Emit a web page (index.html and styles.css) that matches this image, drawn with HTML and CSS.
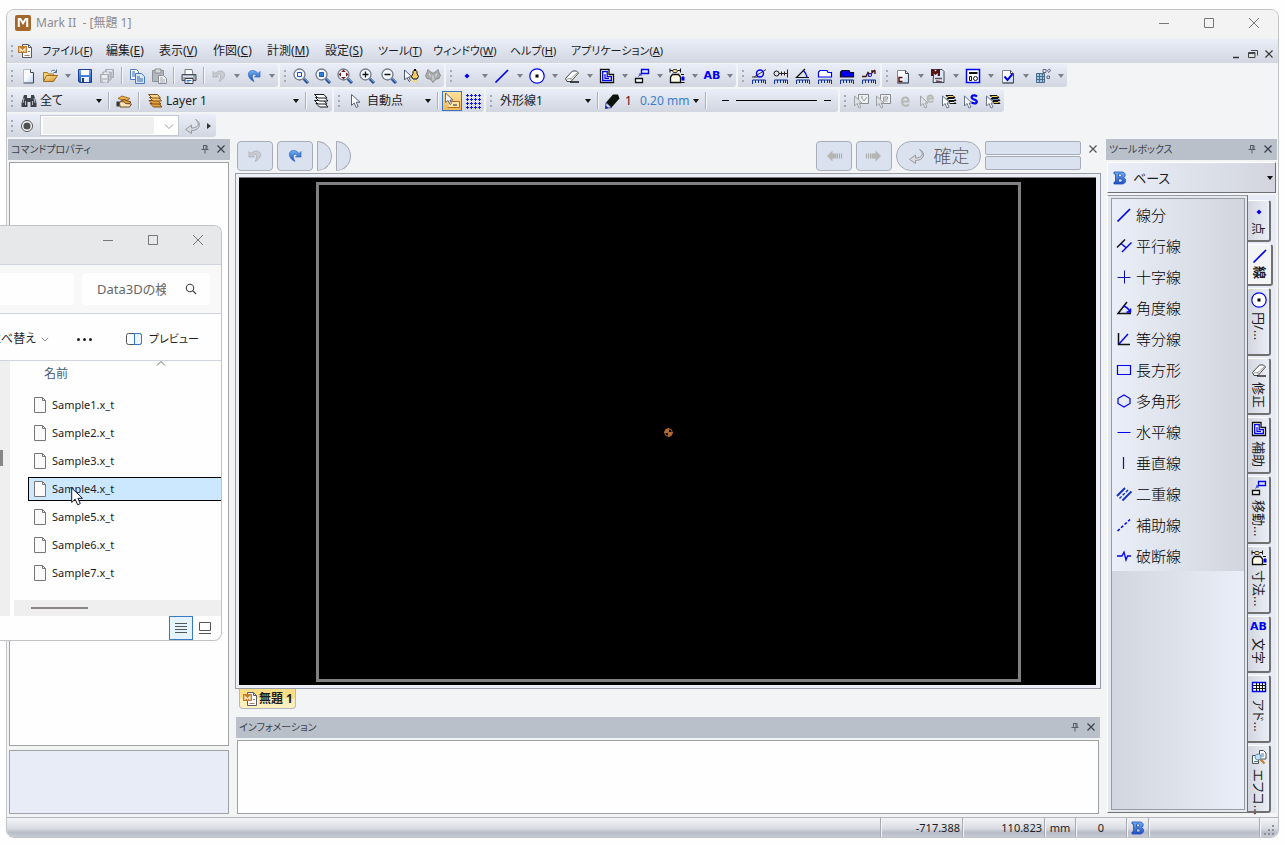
FILE: index.html
```html
<!DOCTYPE html>
<html lang="ja">
<head>
<meta charset="utf-8">
<title>Mark II - [無題 1]</title>
<link rel="stylesheet" href="styles.css">
</head>
<body>
<svg class="defs" aria-hidden="true">
  <defs>
    <linearGradient id="g-gold" x1="0" y1="0" x2="1" y2="1"><stop offset="0" stop-color="#ffe9a8"/><stop offset="1" stop-color="#d08a20"/></linearGradient>
    <linearGradient id="g-blue" x1="0" y1="0" x2="0" y2="1"><stop offset="0" stop-color="#6fb2f2"/><stop offset="1" stop-color="#1a4fc0"/></linearGradient>
    <linearGradient id="g-page" x1="0" y1="0" x2="1" y2="1"><stop offset="0.4" stop-color="#fff"/><stop offset="1" stop-color="#bcd2ee"/></linearGradient>
  </defs>
  <symbol id="logo" viewBox="0 0 16 16"><rect width="16" height="16" rx="2" fill="#a4682f"/><path d="M3.8 12V4h1.6L8 8.2 10.6 4h1.6v8" fill="none" stroke="#fff" stroke-width="2"/></symbol>
  <symbol id="doc" viewBox="0 0 16 16"><path d="M5.500 1.500h6l3 3v10h-9z" fill="#fff" stroke="#555a66"/><path d="M11.500 1.500v3h3" fill="none" stroke="#555a66"/><rect x="1" y="3" width="9" height="7" fill="#c07c2e"/><path d="M3 9V5.500l2.500 2.500L8 5.500V9" fill="none" stroke="#ffe9c4" stroke-width="1.300"/><path d="M7.500 12.500h5M11 8.500h2" stroke="#a08060"/></symbol>
  <symbol id="new" viewBox="0 0 16 16"><path d="M3.500 1.500h7l3 3v10h-10z" fill="url(#g-page)"/><path d="M3.500 14.500v-13h7" fill="none" stroke="#b8bcc8"/><path d="M10.500 1.500v3h3v10.500h-10" fill="none" stroke="#3a4252"/></symbol>
  <symbol id="open" viewBox="0 0 16 16"><path d="M1.500 13.500V4.500h4l1 1.500h5v2" fill="#f6d37a" stroke="#a87820"/><path d="M1.500 13.500l3-6h11l-4 6z" fill="url(#g-gold)" stroke="#a06a18"/><path d="M9 3.500c2-2 4-1.500 5 .5M14.500 1.500v3h-3" fill="none" stroke="#56688c"/></symbol>
  <symbol id="save" viewBox="0 0 16 16"><path d="M1.500 1.500h13v13h-12l-1-1z" fill="url(#g-blue)" stroke="#1c3f94"/><rect x="4" y="2" width="8" height="5" fill="#fff"/><rect x="4" y="9" width="8" height="5" fill="#e8f0fb"/><rect x="5" y="10" width="2" height="4" fill="#1b3a80"/></symbol>
  <symbol id="saveall" viewBox="0 0 16 16"><g fill="#c4c8ce" stroke="#a6aab2"><path d="M6.500 1.500h8v8h-8z"/><path d="M4 4h8v8H4z"/><path d="M1.500 6.500h8v8h-8z"/></g><path d="M3 7h5v3H3zM5 4.500h5v1.500H5zM8 2h5v1.500H8z" fill="#eceef1"/><path d="M4 12h4v2.500H4z" fill="#e2e4e8"/></symbol>
  <symbol id="copy" viewBox="0 0 16 16"><g fill="#fff" stroke="#4a78c0"><path d="M1.500 1.500h6l2 2v8h-8z"/><path d="M6.500 5.500h6l3 3v7h-9z" fill="#d8e8fb"/></g><path d="M3 4h3M3 6h3M3 8h3M8 9h3M8 11h6M8 13h6" stroke="#2f66b4"/></symbol>
  <symbol id="paste" viewBox="0 0 16 16"><path d="M1.500 2.500h11v11h-11z" fill="#b4b7bc" stroke="#8c9097"/><path d="M4 1h6v4H4z" fill="#d6d8dc" stroke="#8c9097"/><path d="M7.500 7.500h5l3 3v5h-8z" fill="#f0f1f3" stroke="#8c9097"/><path d="M9 10h3M9 12h5M9 14h5" stroke="#a6a9ae"/></symbol>
  <symbol id="print" viewBox="0 0 16 16"><path d="M4 1.500h7l1 5H4z" fill="#fff" stroke="#777d88"/><path d="M1 6.500h14v6H1z" fill="#a6acb8" stroke="#4a505c"/><path d="M2 8.500h12" stroke="#e4e8ee"/><path d="M4 10.500h8v5H4z" fill="#fff" stroke="#3c424c"/><path d="M5.500 12.500h5M5.500 14h3" stroke="#3572c8"/><circle cx="13" cy="8" r=".8" fill="#2d8a3c"/></symbol>
  <symbol id="undo" viewBox="0 0 16 16"><path d="M2 3.500v5.500h5.500L5.700 7.200C9 4.500 11.500 7.500 8 13.500 15.500 10 15 3 9.500 3 7 3 5 4.500 4 5.500z" fill="#c9cbcf" stroke="#a9abb0" stroke-width=".7"/></symbol>
  <symbol id="redo" viewBox="0 0 16 16"><path d="M14 3.500v5.500H8.500l1.800-1.800C7 4.500 4.500 7.500 8 13.500.5 10 1 2.500 6.500 2.500 9 2.500 11 4 12 5.500z" fill="url(#g-blue)" stroke="#2458b0" stroke-width=".6"/></symbol>
  <symbol id="lens" viewBox="0 0 16 16"><circle cx="6.500" cy="6.500" r="5.500" fill="#f2f8ff" stroke="#747b88" stroke-width="1.300"/><path d="M10.800 10.800l4.200 4.200" stroke="#284f92" stroke-width="3"/><path d="M11 10.200l4 4" stroke="#80b6ee"/></symbol>
  <symbol id="z-win" viewBox="0 0 16 16"><use href="#lens"/><path d="M4.500 4.500h4v4h-4z" fill="#fff" stroke="#1c4bc0"/></symbol>
  <symbol id="z-fill" viewBox="0 0 16 16"><use href="#lens"/><path d="M4.500 4.500h4v4h-4z" fill="#2f7de0" stroke="#2458a8"/></symbol>
  <symbol id="z-all" viewBox="0 0 16 16"><use href="#lens"/><path d="M6.500 1.500l2.300 2.500H4.200zM6.500 11.500L8.800 9H4.200zM1.500 6.500L4 4.200v4.600zM11.500 6.500L9 4.200v4.600z" fill="#7a2020"/></symbol>
  <symbol id="z-in" viewBox="0 0 16 16"><use href="#lens"/><path d="M3.500 6.500h6M6.500 3.500v6" stroke="#111" stroke-width="1.300"/></symbol>
  <symbol id="z-out" viewBox="0 0 16 16"><use href="#lens"/><path d="M3.500 6.500h6" stroke="#111" stroke-width="1.300"/></symbol>
  <symbol id="arrowcur" viewBox="0 0 16 16"><path d="M3.500 1.500v11l2.700-2.500 2 4.500 2-1-2-4.300H12z" fill="#fff" stroke="#56607a"/></symbol>
  <symbol id="lamp" viewBox="0 0 16 16"><path d="M1.500 2v10l2.500-2.500 2 4 1.500-1-2-3.500h3.500z" fill="#fff" stroke="#4a5a78"/><path d="M10 3.500l2-2 2 2v2l1.500 3-1.500 2.500h-4L8.500 8.500 10 5.500z" fill="#f6cd5c" stroke="#111"/><path d="M11 1h2v2h-2z"/><path d="M11.500 12v2M14 12v3M8.500 12l-1 2" stroke="#f6d660"/></symbol>
  <symbol id="owl" viewBox="0 0 16 16"><path d="M3 1.500l2.500 2.500h1L8 5.500 9.500 4h1L13 1.500l1 3 1.500 3-1.500 3-2.500.5-2 1.500L8 14.500 6.500 12.500l-2-1.500L2 10.500l-1.500-3L2 4.500z" fill="#a7abab" stroke="#888c8c"/><path d="M4 5.500l1.500 3M12 5.500l-1.500 3M8 7.500v5" stroke="#d6d9d9" stroke-width="1.200"/></symbol>
  <symbol id="dot" viewBox="0 0 16 16"><path d="M8 5.500l2.500 2.500L8 10.500 5.500 8z" fill="#0000f0"/></symbol>
  <symbol id="line" viewBox="0 0 16 16"><path d="M1.500 14.500L14 2" stroke="#0000f0" stroke-width="1.700"/></symbol>
  <symbol id="circle" viewBox="0 0 16 16"><circle cx="8" cy="8" r="7.200" fill="#fff" stroke="#0000f0" stroke-width="1.200"/><rect x="6.500" y="6.500" width="3" height="3"/></symbol>
  <symbol id="eraser" viewBox="0 0 16 16"><path d="M1.500 10.500L8.500 3h4l2 2-7.500 8.500H3z" fill="#fcfcfc" stroke="#444"/><path d="M3 11l4-.5L14 4M7 10.500v2" fill="none" stroke="#999"/><path d="M6 14h9" stroke="#111" stroke-width="1.300"/></symbol>
  <symbol id="offset" viewBox="0 0 16 16"><path d="M1.500 1.500h8.500v5h4.500v8h-13z" fill="#fff" stroke="#111" stroke-width="1.300"/><path d="M3.700 3.700h4.500v5h4.200v3.800H3.700z" fill="none" stroke="#0000f0" stroke-width="1.300"/><path d="M6 6v4.300h4" fill="none" stroke="#0000f0" stroke-width="1.200"/></symbol>
  <symbol id="move" viewBox="0 0 16 16"><path d="M7.500 1.500h7v4h-7z" fill="none" stroke="#0000f0" stroke-width="1.300"/><path d="M1.500 10.500h7v4h-7z" fill="#fff" stroke="#111" stroke-width="1.300"/><path d="M6.500 6L4.500 8.500M5 6h2v2" fill="none" stroke="#2432c8"/></symbol>
  <symbol id="dim" viewBox="0 0 16 16"><path d="M1.500 14.500V9l2-2.500h6L11.500 9v5.500z" fill="#fffbe8" stroke="#111" stroke-width="1.300"/><path d="M1 .5v4M11.500.5v4M1 2.500h3M8.500 2.500h3" fill="none" stroke="#111"/><path d="M4.500 1.500h3l1 1.500-1 1.500h-3L3.500 3z" fill="#f6dc90" stroke="#111" stroke-width=".8"/><path d="M12 6.500h3M12 14.500h3.500" stroke="#111"/><path d="M12.500 9.500l1.500-1.500 1.500 1.500v3H12.500z" fill="#0000f0"/></symbol>
  <symbol id="ruler" viewBox="0 0 16 16"><path d="M1.500 16v-4h13v4M4.500 12v3M7.500 12v3M10.500 12v3M12.500 12v3" fill="none" stroke="#0b2f9c"/></symbol>
  <symbol id="m1" viewBox="0 0 16 16"><use href="#ruler"/><path d="M1 9h6M3 9l12-7.500" fill="none" stroke="#333"/><circle cx="9" cy="5.500" r="3.500" fill="none" stroke="#0000f0" stroke-width="1.400"/></symbol>
  <symbol id="m2" viewBox="0 0 16 16"><use href="#ruler"/><circle cx="3.500" cy="5.500" r="2.500" fill="none" stroke="#111"/><path d="M6 5.500h8M14.500 1.500v8M8.500 3.500v4M11.500 3.500v4" stroke="#2c2020"/></symbol>
  <symbol id="m3" viewBox="0 0 16 16"><use href="#ruler"/><path d="M14 9.500H1.500L10 1" fill="none" stroke="#111" stroke-width="1.200"/><path d="M8 2q3 3 4 7" fill="none" stroke="#0000f0" stroke-width="1.300"/></symbol>
  <symbol id="m4" viewBox="0 0 16 16"><use href="#ruler"/><path d="M1.500 9V4l1.500-1.500h7l1 2h3.500V9z" fill="#fff" stroke="#0000f0" stroke-width="1.200"/></symbol>
  <symbol id="m5" viewBox="0 0 16 16"><use href="#ruler"/><path d="M1.500 9V4l1.500-1.500h7l1 2h3.500V9z" fill="#0000f0" stroke="#111" stroke-width="1.200"/></symbol>
  <symbol id="m6" viewBox="0 0 16 16"><use href="#ruler"/><path d="M1 8.500h4l2-4 3 3M7 8.500l7-6.500M10 3h4v3" fill="none" stroke="#401818" stroke-width="1.400"/><circle cx="9" cy="7" r="1.500" fill="#fff" stroke="#0000f0"/></symbol>
  <symbol id="page" viewBox="0 0 16 16"><path d="M2.500 2.500h8l3 3v9.500h-11z" fill="url(#g-page)" stroke="#7d8796"/><path d="M10.500 2.500v3h3V15h-11" fill="none" stroke="#3d4452"/></symbol>
  <symbol id="p-c" viewBox="0 0 16 16"><use href="#page"/><path d="M7.500 9.500H4v4h3.500" fill="none" stroke="#541212" stroke-width="1.500"/></symbol>
  <symbol id="p-m" viewBox="0 0 16 16"><path d="M4 1.500h8l2 2v11H3z" fill="#dce9f8" stroke="#3b4350"/><path d="M1 1h2.500L5.500 3.500 7.500 1H10v7H7.700V5L5.500 7 3.300 5v3H1z" fill="#5a1010"/><path d="M5 10.500h7M6 13l6 1" fill="none" stroke="#6b4a4a" stroke-width="1.600"/></symbol>
  <symbol id="p-form" viewBox="0 0 16 16"><path d="M1.500 1.500h13v13h-13z" fill="#fff" stroke="#0000f0" stroke-width="1.500"/><path d="M4 5h8.500" stroke="#111" stroke-width="2"/><path d="M4.500 8.500h2v4h-2z" fill="none" stroke="#111"/><circle cx="10.500" cy="10.500" r="2" fill="none" stroke="#111"/></symbol>
  <symbol id="p-check" viewBox="0 0 16 16"><use href="#page"/><path d="M4.500 8.500l3 3.500 5-6" fill="none" stroke="#0000f0" stroke-width="2"/></symbol>
  <symbol id="p-grid" viewBox="0 0 16 16"><path d="M1 5h9v10H1z" fill="#9cc8e2"/><path d="M1.500 5.500h8v9h-8zM1 8.500h9M1 11.500h9M4.500 5v10M7.500 5v10" fill="none" stroke="#4a6a88"/><path d="M8 1.500h3v3H8zM12.500 2.500l2-1.500 1 2-2 1.500zM12 8h2.500v2.500H12z" fill="#dde8f0" stroke="#668"/></symbol>
  <symbol id="binoc" viewBox="0 0 16 16"><path d="M3 2h3v3h4V2h3l2.500 8v4H9.500V9h-3v5H.5v-4z" fill="#3c4048"/><path d="M3 5l-1 5M13 5l1 5M4.500 8v4M11.500 8v4" stroke="#b4b8c0"/></symbol>
  <symbol id="hand" viewBox="0 0 16 16"><path d="M2 5.500L6 3l8 2.500L10 8z" fill="#f1b04a" stroke="#8e5a18" stroke-width=".8"/><path d="M4 8.500l4-2 7 2.500-3 3z" fill="#e09830" stroke="#4a3010" stroke-width=".8"/><path d="M.5 8.500h3v5h-3z" fill="#333"/><path d="M3.500 9c3-1 5 0 6 1.500l6 .5-2 3H4z" fill="#ffe2b8" stroke="#4a3010" stroke-width=".8"/></symbol>
  <symbol id="layers" viewBox="0 0 16 16"><g fill="#e9a13e" stroke="#6c4310" stroke-width=".9"><path d="M3 10.500l3.500 3.500H15l-3-3.500z"/><path d="M2 7.500L5.500 11H14l-3-3.500z"/><path d="M2.500 4.500L6 8h8.500l-3-3.500z" fill="#ffc565"/><path d="M1.500 1.500L5 5h8.500l-3-3.500z" fill="#ffd78c"/></g></symbol>
  <symbol id="layersw" viewBox="0 0 16 16"><g fill="#fff" stroke="#16181c"><path d="M3 10.500l3.500 3.500H15l-3-3.500z"/><path d="M1.500 7.500L5 11h9l-3-3.500z"/><path d="M2.500 4.500L6 8h9l-3-3.500z"/><path d="M1.500 1.500L5 5h9l-3-3.500z"/></g></symbol>
  <symbol id="gridpts" viewBox="0 0 16 16"><path d="M0 2.500h16M0 6.500h16M0 10.500h16M0 14.500h16M2.500 0v16M6.500 0v16M10.500 0v16M14.500 0v16" fill="none" stroke="#1616e0" stroke-dasharray="3 1" stroke-dashoffset="3"/></symbol>
  <symbol id="snap" viewBox="0 0 16 16"><path d="M6.500 8.500h9v6h-12" fill="#ffe6a8" stroke="#b06a20"/><path d="M9 12h4" stroke="#222"/><path d="M1.500 0v9.500L4 7.500l2 4 1.500-1-1.500-3.500h3z" fill="#f4f6fa" stroke="#6a6a78"/></symbol>
  <symbol id="pencil" viewBox="0 0 16 16"><path d="M2 9.500L9 1.500h5l1.500 4-8 9z" fill="#0c120c"/><path d="M2 9.500l5.500 5-6 1z" fill="#dfe8ff" stroke="#16208c" stroke-width=".8"/><path d="M1 15.500l1-3 2.500 2.500z" fill="#1a28b0"/></symbol>
  <symbol id="curs" viewBox="0 0 16 16"><path d="M1.500 3v10L4 10.500l2 4.500 2-1-2-4h3z" fill="#fff" stroke="#66718a"/></symbol>
  <symbol id="gcurs" viewBox="0 0 16 16"><path d="M1.500 3v10L4 10.500l2 4.500 2-1-2-4h3z" fill="#dfe1e4" stroke="#a0a3a8"/></symbol>
  <symbol id="s1" viewBox="0 0 16 16"><path d="M5.500 1.500h10v9h-10z" fill="#eff0f2" stroke="#888b90"/><path d="M8 4l3 4 3-4M8 4h2" fill="none" stroke="#989ba0"/><use href="#gcurs"/></symbol>
  <symbol id="s2" viewBox="0 0 16 16"><path d="M5.500 1.500h10v9h-10z" fill="#eff0f2" stroke="#888b90"/><path d="M8.500 6h4V4h-4v4h4" fill="none" stroke="#989ba0"/><use href="#gcurs"/></symbol>
  <symbol id="e" viewBox="0 0 16 16"><path d="M4.500 8.500h7C12 3 5 3 5 8.500c0 5 4.500 5 7 3" fill="none" stroke="#b6b9b4" stroke-width="2"/></symbol>
  <symbol id="s4" viewBox="0 0 16 16"><path d="M8 5.500h6c0-4-5-4-5.500 0 0 4 4 4 6 2.500" fill="none" stroke="#b6b9b4" stroke-width="1.800"/><use href="#gcurs"/></symbol>
  <symbol id="s5" viewBox="0 0 16 16"><g fill="#fff" stroke="#111"><path d="M7 8.500l2 2h6l-2-2zM6 5.500l2 2h7l-2-2z"/><path d="M5 2.500l2 2h7l-2-2z" fill="#f4d878"/></g><use href="#curs"/></symbol>
  <symbol id="s6" viewBox="0 0 16 16"><path d="M14 3.500C11 1 7.500 3 9 5.200c1 1.500 5 1.300 4.800 3.600-.3 2.200-4 2-5.800.2" fill="none" stroke="#0000f0" stroke-width="2.200"/><use href="#curs"/></symbol>
  <symbol id="s7" viewBox="0 0 16 16"><g stroke="#111"><path d="M7 8.500l2 2h6l-2-2z" fill="#f4c850"/><path d="M6 5.500l2 2h7l-2-2z" fill="#5a8ac8"/><path d="M5 2.500l2 2h7l-2-2z" fill="#f4d878"/></g><use href="#curs"/></symbol>
  <symbol id="enter" viewBox="0 0 16 16"><path d="M11.500 1.500c5 4 3 8.500-4 8.500V7L1.500 11.500l6 4v-3c9 0 10.500-8 4-11z" fill="#d9dade" stroke="#96999f"/></symbol>
  <symbol id="larr" viewBox="0 0 16 16"><path d="M1 8l5.500-5.500v3h4v5h-4v3z" fill="#b4b6b4"/><path d="M11.500 5.500v5M13.500 5.500v5M15.500 5.500v5" stroke="#a6a9a8"/></symbol>
  <symbol id="rarr" viewBox="0 0 16 16"><path d="M15 8L9.500 2.500v3h-4v5h4v3z" fill="#b4b6b4"/><path d="M4.500 5.500v5M2.500 5.500v5M.5 5.500v5" stroke="#a6a9a8"/></symbol>
  <symbol id="pin" viewBox="0 0 10 10"><path d="M3 1.500h4M3.500 1.500v4M6 1.500v4M7 1.500v4M1.500 5.500h7M5 6v3.500" fill="none" stroke="#565d68"/></symbol>
  <symbol id="x" viewBox="0 0 10 10"><path d="M1.500 1.500l7 7M8.500 1.500l-7 7" stroke="currentColor" stroke-width="1.200"/></symbol>
  <symbol id="min" viewBox="0 0 10 10"><path d="M0 5.500h10" stroke="currentColor"/></symbol>
  <symbol id="max" viewBox="0 0 10 10"><path d="M.5.5h9v9h-9z" fill="none" stroke="currentColor"/></symbol>
  <symbol id="close" viewBox="0 0 10 10"><path d="M0 0l10 10M10 0L0 10" stroke="currentColor"/></symbol>
  <symbol id="restore" viewBox="0 0 10 10"><path d="M3 1.500h6.500v5M.5 3.500h6.500v5H.5zM.5 4.500h6.500" fill="none" stroke="#444"/></symbol>
  <symbol id="lowmin" viewBox="0 0 10 10"><path d="M1 8.500h6" stroke="#333" stroke-width="1.500"/></symbol>
  <symbol id="bee" viewBox="0 0 16 16"><path d="M2 2h7.500c4.500 0 4.500 4.500 2 5.500 3.500 1.500 2.500 6.500-1.500 6.500H2v-2h1.500V4H2zM6.500 4v2.800h1.800c1.800 0 1.800-2.800 0-2.800zM6.500 9v3h2c2.200 0 2.200-3 0-3z" fill="url(#g-blue)" fill-rule="evenodd" stroke="#2349b8" stroke-width=".8"/></symbol>
  <symbol id="t-par" viewBox="0 0 16 16"><path d="M1 9.500L9 1.500" stroke="#111" stroke-width="1.400"/><path d="M6 14l9.500-9.500M5 5.500l5.500 4.500" stroke="#0000e0" stroke-width="1.400"/></symbol>
  <symbol id="t-cross" viewBox="0 0 16 16"><path d="M1.500 8.500h13M8.500 1.500v13" stroke="#1010b0"/></symbol>
  <symbol id="t-ang" viewBox="0 0 16 16"><path d="M15 13.500H2L11 2" fill="none" stroke="#111" stroke-width="1.500"/><path d="M7.500 6q5 1.500 6.500 6.500M10.500 12h4V8.500" fill="none" stroke="#0000f0" stroke-width="1.400"/></symbol>
  <symbol id="t-div" viewBox="0 0 16 16"><path d="M2.500 2v11.500H14" fill="none" stroke="#111" stroke-width="1.500"/><path d="M3 13L12 3" stroke="#0000f0" stroke-width="1.400"/></symbol>
  <symbol id="t-rect" viewBox="0 0 16 16"><path d="M1.500 3.500h13v9h-13z" fill="none" stroke="#0000f0" stroke-width="1.200"/></symbol>
  <symbol id="t-hex" viewBox="0 0 16 16"><path d="M8 2l6 3.500v5L8 14l-6-3.500v-5z" fill="none" stroke="#0000f0" stroke-width="1.200"/></symbol>
  <symbol id="t-h" viewBox="0 0 16 16"><path d="M1.500 8.500h13" stroke="#0000f0"/></symbol>
  <symbol id="t-v" viewBox="0 0 16 16"><path d="M7.500 2v12" stroke="#1010a0" stroke-width="1.200"/></symbol>
  <symbol id="t-dbl" viewBox="0 0 16 16"><path d="M1 10l8-8M6.500 14.500L15.500 5.500" stroke="#1030c0" stroke-width="1.900"/><path d="M3.500 12.500L13 3" stroke="#1030c0" stroke-width="1.400" stroke-dasharray="3 1.500"/></symbol>
  <symbol id="t-aux" viewBox="0 0 16 16"><path d="M1.500 14L14 2.500" stroke="#0000f0" stroke-width="1.600" stroke-dasharray="3 1.800"/></symbol>
  <symbol id="t-brk" viewBox="0 0 16 16"><path d="M1 8h5l2-4 2 8 1.500-4H15" fill="none" stroke="#0000f0" stroke-width="1.300"/></symbol>
  <symbol id="table" viewBox="0 0 16 16"><path d="M1.500 3.500h13v9h-13z" fill="#fff" stroke="#0000f0" stroke-width="1.400"/><path d="M2 6.500h12M2 9.500h12M5.500 4v8M8.500 4v8M11.500 4v8" stroke="#111"/></symbol>
  <symbol id="inspect" viewBox="0 0 16 16"><path d="M8.500 1.500h4l2.500 2.500v6H8.500zM1.500 6.500h6v8h-6z" fill="#fff" stroke="#455"/><path d="M10 5h3M10 7h3M3 12.500h4" stroke="#4878b0"/><circle cx="7" cy="8" r="3" fill="#bfe2fa" stroke="#6a90b0"/><path d="M9.500 10.500l4 4" stroke="#c07828" stroke-width="2"/></symbol>
  <symbol id="file" viewBox="0 0 12 16"><path d="M.5.500h8l3 3v12H.5z" fill="#fafafa" stroke="#777"/><path d="M8.500.5v3h3" fill="none" stroke="#777"/></symbol>
  <symbol id="search" viewBox="0 0 12 12"><circle cx="5" cy="5" r="3.700" fill="none" stroke="#444" stroke-width="1.100"/><path d="M7.700 7.700L11 11" stroke="#444" stroke-width="1.200"/></symbol>
  <symbol id="chev" viewBox="0 0 10 10"><path d="M1 3.500l4 4 4-4" fill="none" stroke="currentColor"/></symbol>
  <symbol id="preview" viewBox="0 0 16 12"><rect x=".5" y=".5" width="15" height="11" rx="2" fill="#f6faff" stroke="#555"/><path d="M8.500.5h5a2 2 0 0 1 2 2v7a2 2 0 0 1-2 2h-5z" fill="#eef5ff" stroke="#2a76d0"/></symbol>
  <symbol id="rows" viewBox="0 0 12 10"><path d="M0 .5h12M0 3.500h12M0 6.500h12M0 9.500h12" stroke="#555"/></symbol>
  <symbol id="thumb" viewBox="0 0 12 12"><path d="M.5.500h11v8H.5zM0 11.500h12" fill="none" stroke="#555"/></symbol>
  <symbol id="origin" viewBox="0 0 9 9"><circle cx="4.500" cy="4.500" r="3.800" fill="none" stroke="#b06a30"/><path d="M4.500 4.500V.5a4 4 0 0 0-4 4zM4.500 4.500v4a4 4 0 0 0 4-4z" fill="#b06a30"/><path d="M4.500 0v9M0 4.500h9" stroke="#b06a30"/></symbol>
  <symbol id="grip" viewBox="0 0 12 12"><path d="M8 0h2v2H8zM4 4h2v2H4zM8 4h2v2H8zM0 8h2v2H0zM4 8h2v2H4zM8 8h2v2H8z" fill="#8d919a"/></symbol>
  <symbol id="pointer" viewBox="0 0 12 19"><path d="M.7 1v14.500l3.500-3.300 2.500 5.600 2.600-1.200-2.400-5.300h4.600z" fill="#fff" stroke="#15182c"/></symbol>
</svg>

<main class="app">
  <header class="title">
    <svg class="i16"><use href="#logo"/></svg>
    <h1>Mark II&nbsp; - [無題 1]</h1>
    <div class="wctl">
      <button type="button" aria-label="最小化"><svg class="i10"><use href="#min"/></svg></button>
      <button type="button" aria-label="最大化"><svg class="i10"><use href="#max"/></svg></button>
      <button type="button" aria-label="閉じる"><svg class="i10"><use href="#close"/></svg></button>
    </div>
  </header>

  <nav class="menu">
    <svg class="i16"><use href="#doc"/></svg>
    <div class="menu-items">
      <button class="kana" type="button">ファイル(<u>F</u>)</button><button type="button">編集(<u>E</u>)</button><button type="button">表示(<u>V</u>)</button><button type="button">作図(<u>C</u>)</button><button type="button">計測(<u>M</u>)</button><button type="button">設定(<u>S</u>)</button><button class="kana" type="button">ツール(<u>T</u>)</button><button class="kana" type="button">ウィンドウ(<u>W</u>)</button><button class="kana" type="button">ヘルプ(<u>H</u>)</button><button class="kana" type="button">アプリケーション(<u>A</u>)</button>
    </div>
    <div class="mdi">
      <button type="button" aria-label="文書を最小化"><svg class="i10"><use href="#lowmin"/></svg></button>
      <button type="button" aria-label="文書を元に戻す"><svg class="i10"><use href="#restore"/></svg></button>
      <button type="button" aria-label="文書を閉じる"><svg class="i10"><use href="#x"/></svg></button>
    </div>
  </nav>

  <div class="bars">
    <div class="bar">
      <div class="seg">
        <button class="tb" type="button" aria-label="新規"><svg><use href="#new"/></svg></button><button class="tb" type="button" aria-label="開く"><svg><use href="#open"/></svg></button><button class="dd" type="button" aria-label="開くの一覧"></button><button class="tb" type="button" aria-label="保存"><svg><use href="#save"/></svg></button><button class="tb" type="button" aria-label="すべて保存"><svg><use href="#saveall"/></svg></button><i class="sep"></i><button class="tb" type="button" aria-label="コピー"><svg><use href="#copy"/></svg></button><button class="tb" type="button" aria-label="貼り付け"><svg><use href="#paste"/></svg></button><i class="sep"></i><button class="tb" type="button" aria-label="印刷"><svg><use href="#print"/></svg></button><i class="sep"></i><button class="tb" type="button" aria-label="元に戻す"><svg><use href="#undo"/></svg></button><button class="dd" type="button" aria-label="履歴"></button><button class="tb" type="button" aria-label="やり直し"><svg><use href="#redo"/></svg></button><button class="dd" type="button" aria-label="やり直し履歴"></button>
      </div>
      <div class="seg">
        <button class="tb" type="button" aria-label="窓拡大"><svg><use href="#z-win"/></svg></button><button class="tb" type="button" aria-label="用紙表示"><svg><use href="#z-fill"/></svg></button><button class="tb" type="button" aria-label="全体表示"><svg><use href="#z-all"/></svg></button><button class="tb" type="button" aria-label="拡大"><svg><use href="#z-in"/></svg></button><button class="tb" type="button" aria-label="縮小"><svg><use href="#z-out"/></svg></button><button class="tb" type="button" aria-label="強調"><svg><use href="#lamp"/></svg></button><button class="tb" type="button" aria-label="検索"><svg><use href="#owl"/></svg></button>
      </div>
      <div class="seg">
        <button class="tb" type="button" aria-label="点"><svg><use href="#dot"/></svg></button><button class="dd" type="button" aria-label="点の一覧"></button><button class="tb" type="button" aria-label="線"><svg><use href="#line"/></svg></button><button class="dd" type="button" aria-label="線の一覧"></button><button class="tb" type="button" aria-label="円"><svg><use href="#circle"/></svg></button><button class="dd" type="button" aria-label="円の一覧"></button><button class="tb" type="button" aria-label="修正"><svg><use href="#eraser"/></svg></button><button class="dd" type="button" aria-label="修正の一覧"></button><button class="tb" type="button" aria-label="補助"><svg><use href="#offset"/></svg></button><button class="dd" type="button" aria-label="補助の一覧"></button><button class="tb" type="button" aria-label="移動"><svg><use href="#move"/></svg></button><button class="dd" type="button" aria-label="移動の一覧"></button><button class="tb" type="button" aria-label="寸法"><svg><use href="#dim"/></svg></button><button class="dd" type="button" aria-label="寸法の一覧"></button><button class="tb" type="button"><b class="ab">AB</b></button><button class="dd" type="button" aria-label="文字の一覧"></button>
      </div>
      <div class="seg">
        <button class="tb" type="button" aria-label="計測1"><svg><use href="#m1"/></svg></button><button class="tb" type="button" aria-label="計測2"><svg><use href="#m2"/></svg></button><button class="tb" type="button" aria-label="計測3"><svg><use href="#m3"/></svg></button><button class="tb" type="button" aria-label="計測4"><svg><use href="#m4"/></svg></button><button class="tb" type="button" aria-label="計測5"><svg><use href="#m5"/></svg></button><button class="tb" type="button" aria-label="計測6"><svg><use href="#m6"/></svg></button>
      </div>
      <div class="seg">
        <button class="tb" type="button" aria-label="コマンド"><svg><use href="#p-c"/></svg></button><button class="dd" type="button" aria-label="コマンド一覧"></button><button class="tb" type="button" aria-label="マクロ"><svg><use href="#p-m"/></svg></button><button class="dd" type="button" aria-label="マクロ一覧"></button><button class="tb" type="button" aria-label="フォーム"><svg><use href="#p-form"/></svg></button><button class="dd" type="button" aria-label="フォーム一覧"></button><button class="tb" type="button" aria-label="検査"><svg><use href="#p-check"/></svg></button><button class="dd" type="button" aria-label="検査一覧"></button><button class="tb" type="button" aria-label="部品"><svg><use href="#p-grid"/></svg></button><button class="dd" type="button" aria-label="部品一覧"></button>
      </div>
    </div>

    <div class="bar">
      <div class="seg">
        <label class="pick w-all"><svg class="i16"><use href="#binoc"/></svg><select aria-label="検索対象"><option>全て</option></select></label><i class="sep"></i><button class="tb" type="button" aria-label="レイヤ取得"><svg><use href="#hand"/></svg></button><i class="sep"></i><label class="pick w-layer"><svg class="i16"><use href="#layers"/></svg><select aria-label="レイヤ"><option>Layer 1</option></select></label><i class="sep"></i><button class="tb" type="button" aria-label="レイヤ設定"><svg><use href="#layersw"/></svg></button>
      </div>
      <div class="seg">
        <label class="pick w-point"><svg class="i16"><use href="#arrowcur"/></svg><select aria-label="点種"><option>自動点</option></select></label><i class="sep"></i><button class="tb on" type="button" aria-label="スナップ"><svg><use href="#snap"/></svg></button><button class="tb" type="button" aria-label="グリッド"><svg><use href="#gridpts"/></svg></button>
      </div>
      <div class="seg">
        <label class="pick w-style"><select aria-label="線種"><option>外形線1</option></select></label><i class="sep"></i><label class="pick w-pen"><svg class="i16"><use href="#pencil"/></svg><b class="penno">1</b><select class="blue" aria-label="線幅"><option>0.20 mm</option></select></label><i class="sep"></i><span class="linetype"><i></i><i></i><i></i></span>
      </div>
      <div class="seg">
        <button class="tb" type="button" aria-label="選択1"><svg><use href="#s1"/></svg></button><button class="tb" type="button" aria-label="選択2"><svg><use href="#s2"/></svg></button><button class="tb" type="button" aria-label="要素"><svg><use href="#e"/></svg></button><button class="tb" type="button" aria-label="要素選択"><svg><use href="#s4"/></svg></button><button class="tb" type="button" aria-label="レイヤ選択"><svg><use href="#s5"/></svg></button><button class="tb" type="button" aria-label="スタイル選択"><svg><use href="#s6"/></svg></button><button class="tb" type="button" aria-label="色選択"><svg><use href="#s7"/></svg></button>
      </div>
    </div>

    <div class="bar">
      <div class="seg cmdseg">
        <input class="rad" type="radio" checked aria-label="入力">
        <span class="combo"><input type="text" disabled aria-label="コマンド入力"><svg class="i10"><use href="#chev"/></svg></span>
        <button class="tb" type="button" aria-label="実行"><svg><use href="#enter"/></svg></button><button class="more" type="button" aria-label="その他"></button>
      </div>
    </div>
  </div>

  <div class="dock">
    <section class="left">
      <div class="phead"><h2>コマンドプロパティ</h2><button type="button" aria-label="固定"><svg class="i10"><use href="#pin"/></svg></button><button type="button" aria-label="閉じる"><svg class="i10"><use href="#x"/></svg></button></div>
      <div class="props"></div>
      <div class="hint"></div>
    </section>

    <section class="center">
      <div class="cmd">
        <button class="big" type="button" aria-label="元に戻す"><svg class="i16"><use href="#undo"/></svg></button>
        <button class="big" type="button" aria-label="やり直し"><svg class="i16"><use href="#redo"/></svg></button>
        <button class="half" type="button" aria-label="次"></button>
        <button class="half" type="button" aria-label="次の次"></button>
        <span class="fill"></span>
        <button class="big" type="button" aria-label="戻る"><svg class="i16"><use href="#larr"/></svg></button>
        <button class="big" type="button" aria-label="進む"><svg class="i16"><use href="#rarr"/></svg></button>
        <button class="ok" type="button"><svg class="i16"><use href="#enter"/></svg>確定</button>
        <span class="gauges"><i></i><i></i></span>
        <button class="cx" type="button" aria-label="閉じる"><svg class="i10"><use href="#x"/></svg></button>
      </div>
      <div class="frame"><div class="canvas"><div class="sheet"><svg class="origin"><use href="#origin"/></svg></div></div></div>
      <div class="doctabs"><button type="button"><svg class="i16"><use href="#doc"/></svg>無題 1</button></div>
      <div class="phead"><h2>インフォメーション</h2><button type="button" aria-label="固定"><svg class="i10"><use href="#pin"/></svg></button><button type="button" aria-label="閉じる"><svg class="i10"><use href="#x"/></svg></button></div>
      <div class="info"></div>
    </section>

    <section class="right">
      <div class="phead"><h2>ツールボックス</h2><button type="button" aria-label="固定"><svg class="i10"><use href="#pin"/></svg></button><button type="button" aria-label="閉じる"><svg class="i10"><use href="#x"/></svg></button></div>
      <label class="pick base"><svg class="i16"><use href="#bee"/></svg><select aria-label="ツールセット"><option>ベース</option></select></label>
      <div class="tools">
        <div class="tlist-wrap"><div class="tlist">
          <button type="button"><svg class="i16"><use href="#line"/></svg>線分</button>
          <button type="button"><svg class="i16"><use href="#t-par"/></svg>平行線</button>
          <button type="button"><svg class="i16"><use href="#t-cross"/></svg>十字線</button>
          <button type="button"><svg class="i16"><use href="#t-ang"/></svg>角度線</button>
          <button type="button"><svg class="i16"><use href="#t-div"/></svg>等分線</button>
          <button type="button"><svg class="i16"><use href="#t-rect"/></svg>長方形</button>
          <button type="button"><svg class="i16"><use href="#t-hex"/></svg>多角形</button>
          <button type="button"><svg class="i16"><use href="#t-h"/></svg>水平線</button>
          <button type="button"><svg class="i16"><use href="#t-v"/></svg>垂直線</button>
          <button type="button"><svg class="i16"><use href="#t-dbl"/></svg>二重線</button>
          <button type="button"><svg class="i16"><use href="#t-aux"/></svg>補助線</button>
          <button type="button"><svg class="i16"><use href="#t-brk"/></svg>破断線</button>
        </div></div>
        <div class="vtabs">
          <button class="short" type="button"><svg class="i16"><use href="#dot"/></svg><span>点</span></button>
          <button class="short sel" type="button"><svg class="i16"><use href="#line"/></svg><span>線</span></button>
          <button class="long" type="button"><svg class="i16"><use href="#circle"/></svg><span>円/...</span></button>
          <button class="mid" type="button"><svg class="i16"><use href="#eraser"/></svg><span>修正</span></button>
          <button class="mid" type="button"><svg class="i16"><use href="#offset"/></svg><span>補助</span></button>
          <button class="long" type="button"><svg class="i16"><use href="#move"/></svg><span>移動...</span></button>
          <button class="long" type="button"><svg class="i16"><use href="#dim"/></svg><span>寸法...</span></button>
          <button class="mid" type="button"><b class="ab">AB</b><span>文字</span></button>
          <button class="long" type="button"><svg class="i16"><use href="#table"/></svg><span>アド...</span></button>
          <button class="long" type="button"><svg class="i16"><use href="#inspect"/></svg><span>エフコ...</span></button>
        </div>
      </div>
    </section>
  </div>

  <footer class="status">
    <span class="num">-717.388</span><span class="num">110.823</span><span class="unit">mm</span><span class="zero">0</span><span class="sb"><svg class="i16"><use href="#bee"/></svg></span><span class="rest"></span><span class="gripc"><svg class="grip"><use href="#grip"/></svg></span>
  </footer>
</main>

<aside class="explorer">
  <div class="etitle">
    <button type="button" aria-label="最小化"><svg class="i10"><use href="#min"/></svg></button>
    <button type="button" aria-label="最大化"><svg class="i10"><use href="#max"/></svg></button>
    <button type="button" aria-label="閉じる"><svg class="i10"><use href="#close"/></svg></button>
  </div>
  <div class="eaddr"><span class="path"></span><label class="find"><input type="text" value="Data3Dの検索" aria-label="検索"><svg class="i12"><use href="#search"/></svg></label></div>
  <div class="ecmd">
    <button class="sort" type="button">並べ替え</button><svg class="i8"><use href="#chev"/></svg>
    <button class="dots" type="button" aria-label="その他"><i></i><i></i><i></i></button>
    <button class="prev" type="button"><svg><use href="#preview"/></svg>プレビュー</button>
  </div>
  <div class="ebody">
    <div class="navstrip"><i></i></div>
    <div class="files">
      <div class="colhead"><span>名前</span><svg class="i10"><use href="#chev"/></svg></div>
      <ul>
        <li><svg><use href="#file"/></svg>Sample1.x_t</li>
        <li><svg><use href="#file"/></svg>Sample2.x_t</li>
        <li><svg><use href="#file"/></svg>Sample3.x_t</li>
        <li class="cur"><svg><use href="#file"/></svg>Sample4.x_t<svg class="pointer"><use href="#pointer"/></svg></li>
        <li><svg><use href="#file"/></svg>Sample5.x_t</li>
        <li><svg><use href="#file"/></svg>Sample6.x_t</li>
        <li><svg><use href="#file"/></svg>Sample7.x_t</li>
      </ul>
      <div class="hscroll"><i></i></div>
    </div>
  </div>
  <div class="efoot"><button class="act" type="button" aria-label="詳細"><svg class="rows"><use href="#rows"/></svg></button><button type="button" aria-label="サムネイル"><svg class="i12"><use href="#thumb"/></svg></button></div>
</aside>
</body>
</html>
```

FILE: styles.css
```css
* { box-sizing: border-box; }
body {
  margin: 0;
  min-height: 100vh;
  display: flex;
  padding: 9px 6px 7px;
  background: #fefefe;
  color: #1c1c24;
  font: 12px/16px "Noto Sans", "Noto Sans CJK JP", sans-serif;
  font-feature-settings: "palt";
}
button, select, input { font: inherit; color: inherit; font-feature-settings: inherit; }
button { border: 0; padding: 0; margin: 0; background: none; display: flex; align-items: center; justify-content: center; white-space: nowrap; }
h1, h2, ul { margin: 0; padding: 0; font: inherit; list-style: none; }
svg { display: block; flex: none; }
.defs { position: absolute; width: 0; height: 0; }
.i8 { width: 8px; height: 8px; }
.i10 { width: 10px; height: 10px; }
.i12 { width: 12px; height: 12px; }
.i16 { width: 16px; height: 16px; }

.app { flex: 1; min-width: 0; display: flex; flex-direction: column; border: 1px solid #c2c3c6; border-radius: 8px; background: #f3f4f6; overflow: hidden; }

.title { display: flex; align-items: center; height: 29px; padding: 0 19px 3px 8px; gap: 5px; background: #f3f3f3; color: #8c8c90; }
.title h1 { flex: 1; }
.wctl { display: flex; gap: 35px; color: #777; }

.menu { display: flex; align-items: center; height: 24px; padding-right: 4px; background: linear-gradient(#e9eef8, #d2d6e0); }
.menu::before, .seg::before { content: ""; flex: none; width: 2px; height: 12px; margin: 0 4px; background: repeating-linear-gradient(#a4a9b4 0 2px, transparent 2px 5px); }
.menu-items { flex: 1; display: grid; grid-template-columns: 64px 53px 54px 54px 58px 53px 55px 77px 61px 1fr; margin-left: 9px; }
.menu-items button { justify-content: flex-start; }
.menu-items .kana { font-size: 11px; }
.mdi { display: flex; gap: 6px; color: #333; }
.mdi button { padding-top: 5px; }

.bars { display: flex; flex-direction: column; gap: 2px; padding: 1px 0 2px; }
.bar { display: flex; gap: 2px; }
.seg { display: flex; align-items: center; height: 23px; border-radius: 0 3px 3px 0; background: linear-gradient(#e9eef8, #d2d6e0); }
.tb { width: 22px; height: 20px; }
.tb svg { width: 16px; height: 16px; }
.tb.on { width: 20px; border: 1px solid #3a74c4; background: linear-gradient(#ffe29a, #f2b75a); }
.dd { width: 13px; height: 20px; }
.dd::after { content: ""; border: 3px solid transparent; border-top: 4px solid #7c8088; border-bottom: 0; }
.sep { width: 1px; height: 17px; margin: 0 4px 0 3px; background: #a9aeb8; box-shadow: 1px 0 #f6f8fc; }
.ab { color: #0000f0; font: bold 11px/14px "DejaVu Sans", sans-serif; }

.pick { display: flex; align-items: center; gap: 3px; height: 21px; padding-right: 3px; }
.pick select { flex: 1; min-width: 0; appearance: none; border: 0; padding: 0; margin: 0; background: none; }
.pick::after { content: ""; border: 3px solid transparent; border-top: 4px solid #111; border-bottom: 0; }
.w-all { width: 88px; padding-left: 4px; }
.w-layer { width: 159px; padding-left: 4px; }
.w-point { width: 90px; padding-left: 4px; }
.w-style { width: 98px; padding-left: 4px; }
.w-pen { width: 100px; padding-left: 2px; }
.w-pen .penno { width: 14px; padding-left: 2px; font-weight: normal; color: #5c1010; }
.w-pen .blue { color: #3c7ec8; }
.linetype { display: flex; align-items: center; gap: 7px; width: 128px; padding: 0 7px 0 12px; }
.linetype i { width: 7px; height: 1px; background: #000; }
.linetype i:nth-child(2) { flex: 1; }
.cmdseg { width: 209px; }
.rad { width: 12px; height: 12px; margin: 0 7px 0 4px; accent-color: #505050; }
.combo { display: flex; align-items: center; width: 139px; height: 21px; padding: 2px 4px 2px 2px; border: 1px solid #c3c8d2; background: #fff; color: #999; }
.combo input { flex: 1; min-width: 0; height: 17px; border: 0; margin-right: 10px; background: #efefef; }
.cmdseg .tb { margin: 0 2px; }
.more::after { content: ""; border: 3px solid transparent; border-left: 4px solid #333; border-right: 0; margin-left: 2px; }

.dock { flex: 1; display: grid; grid-template-columns: 222px minmax(0, 1fr) 171px; gap: 5px; padding: 0 1px 3px; }
.phead { flex: none; display: flex; align-items: center; gap: 6px; height: 21px; padding: 0 4px 2px 3px; background: #b9c0ca; color: #3c404c; }
.phead h2 { flex: 1; font-size: 10px; }
.left, .center, .right { display: flex; flex-direction: column; min-width: 0; }
.props { flex: 1; margin: 2px 1px 4px; border: 1px solid #a0a1a3; background: #fefefe; }
.hint { height: 64px; margin: 0 1px; border: 1px solid #a0a1a3; background: #e7ecf6; }

.cmd { display: flex; gap: 4px; padding: 2px 2px 2px 2px; }
.big { width: 36px; height: 30px; border: 1px solid #a8acb6; border-radius: 4px; background: #dae1ef; }
.half { width: 15px; height: 30px; border: 1px solid #a8acb6; border-radius: 0 15px 15px 0; background: #dae1ef; }
.fill { flex: 1; }
.ok { width: 85px; height: 30px; gap: 10px; border: 1px solid #a8acb6; border-radius: 15px; background: #dae1ef; color: #55575c; font-size: 18px; font-weight: 300; }
.gauges { display: flex; flex-direction: column; gap: 1px; width: 96px; }
.gauges i { height: 14px; border: 1px solid #a8acb6; border-radius: 2px; background: #dae1ef; }
.cx { align-self: flex-start; width: 12px; height: 15px; margin-left: 2px; color: #555; }
.frame { flex: 1; display: flex; padding: 3px 4px 3px 3px; border: 1px solid #989da8; background: #eceff5; }
.canvas { flex: 1; display: flex; padding: 4px 75px 3px 77px; border-top: 1px solid #777; background: #000; }
.sheet { flex: 1; display: grid; place-items: center; border: 3px solid #808080; }
.origin { width: 9px; height: 9px; }
.doctabs { display: flex; padding: 0 4px 8px; }
.doctabs button { height: 20px; gap: 1px; padding: 0 2px; border: 1px solid #b4b8c0; border-top: 0; border-radius: 0 0 4px 4px; background: linear-gradient(#fbdf86 0 45%, #fdf0bd 55%); font-weight: bold; }
.center .phead { margin: 0 1px; }
.info { height: 74px; margin: 2px 2px 0; border: 1px solid #a0a1a3; background: #fefefe; }

.base { height: 31px; margin: 2px 1px; padding-left: 4px; gap: 5px; padding-right: 2px; border: 1px solid #fff; border-right-color: #6d7077; border-bottom-color: #6d7077; background: linear-gradient(90deg, #eaeff9, #d2d5de); font-size: 13px; }
.tools { flex: 1; display: flex; margin: 0 1px 1px; background: #e6ebf5; }
.tlist-wrap { flex: 1; display: flex; padding: 2px 2px 2px 3px; border-right: 1px solid #707070; border-bottom: 1px solid #707070; border-left: 1px solid #fff; border-top: 1px solid #9a9da4; background: #e3e7ee; }
.tlist { flex: 1; border: 1px solid #999ca2; background: linear-gradient(90deg, #d2d6de, #e9eef8); }
.tlist button { width: 100%; height: 31px; justify-content: flex-start; gap: 4px; padding-left: 4px; background: linear-gradient(90deg, #e9eef8, #d2d5dd); font-size: 15px; font-weight: 300; color: #000; }
.vtabs { display: flex; flex-direction: column; gap: 2px; width: 28px; padding: 5px 5px 0 0; }
.vtabs button { flex-direction: column; justify-content: flex-start; gap: 4px; width: 23px; padding-top: 3px; border: solid #707070; border-width: 0 2px 2px 0; border-top: 1px solid #fff; border-radius: 0 3px 3px 0; background: linear-gradient(90deg, #d3d6de, #eaeef7); font-size: 13px; line-height: 18px; }
.vtabs span { writing-mode: vertical-rl; text-orientation: sideways; }
.vtabs .short { height: 42px; gap: 2px; }
.vtabs .mid { height: 57px; }
.vtabs .long { height: 68px; }
.vtabs .sel { width: 25px; background: #f3f4f6; font-weight: bold; }

.status { display: flex; height: 20px; border-top: 1px solid #b2b5bc; background: linear-gradient(#f3f4f6, #d9dce2 55%, #b9bec9 75%, #c6cad2); justify-content: flex-end; font-size: 11px; }
.status span { display: flex; align-items: center; justify-content: flex-end; padding: 0 2px; border-left: 1px solid #a6a9b0; box-shadow: inset 1px 0 #f4f5f8; }
.status .num { width: 82px; }
.status .unit { width: 31px; justify-content: center; }
.status .zero { width: 51px; justify-content: center; }
.status .sb { width: 22px; justify-content: center; }
.status .rest { width: 111px; }
.status .gripc { width: 19px; align-items: flex-end; }
.grip { width: 12px; height: 12px; }

.explorer { position: absolute; left: 0; top: 225px; width: 222px; display: flex; flex-direction: column; border: 1px solid #c0c2c6; border-left: 0; border-radius: 0 8px 8px 0; background: #fefefe; overflow: hidden; }
.etitle { display: flex; justify-content: flex-end; gap: 35px; height: 39px; padding: 0 18px 10px 0; border-bottom: 1px solid #cfd4de; background: #e6e8ea; color: #777; }
.eaddr { display: flex; align-items: center; gap: 8px; height: 49px; padding-right: 11px; border-bottom: 1px solid #cfd4de; background: #f8f8f8; }
.path { flex: 1; height: 32px; border-radius: 0 4px 4px 0; background: #fefefe; }
.find { display: flex; align-items: center; gap: 19px; width: 128px; height: 32px; padding: 0 13px 0 15px; border-radius: 4px; background: #fefefe; }
.find input { flex: 1; min-width: 0; padding: 0; border: 0; background: none; color: #666; font-size: 13px; }
.ecmd { display: flex; align-items: center; height: 47px; padding: 4px 22px 0 0; border-bottom: 1px solid #cfd4de; }
.sort { width: 36px; justify-content: flex-end; overflow: hidden; margin-right: 5px; }
.ecmd .i8 { color: #777; }
.dots { gap: 3px; margin-left: 28px; }
.dots i { width: 3px; height: 3px; border-radius: 2px; background: #222; }
.prev { flex: 1; justify-content: flex-end; gap: 7px; font-size: 11px; }
.prev svg { width: 16px; height: 12px; }
.ebody { display: flex; }
.navstrip { display: flex; align-items: center; width: 10px; background: #efefef; }
.navstrip i { width: 3px; height: 16px; margin-bottom: 62px; background: #888; }
.files { flex: 1; min-width: 0; margin-left: 4px; }
.colhead { display: flex; align-items: flex-start; height: 32px; padding-left: 30px; color: #465a78; }
.colhead span { width: 112px; padding-top: 5px; }
.colhead svg { transform: rotate(180deg); color: #666; margin-top: -2px; }
.files ul { display: grid; gap: 4px; padding: 0 0 15px 14px; font-size: 11px; }
.files li { display: flex; align-items: center; gap: 6px; height: 24px; padding-left: 5px; border: 1px solid transparent; border-right: 0; }
.files li svg { width: 12px; height: 16px; }
.files .cur { position: relative; border-color: #000; background: #cce8ff; }
.files li .pointer { position: absolute; left: 42px; top: 9px; width: 12px; height: 19px; }
.hscroll { display: flex; align-items: center; height: 16px; padding-left: 17px; background: #efefef; }
.hscroll i { width: 57px; height: 2px; background: #8a8484; }
.efoot { display: flex; justify-content: flex-end; height: 24px; padding-right: 4px; }
.efoot button { width: 24px; }
.efoot .act { border: 1px solid #3a78c8; background: #e5f3fd; }
.rows { width: 12px; height: 10px; }
```
